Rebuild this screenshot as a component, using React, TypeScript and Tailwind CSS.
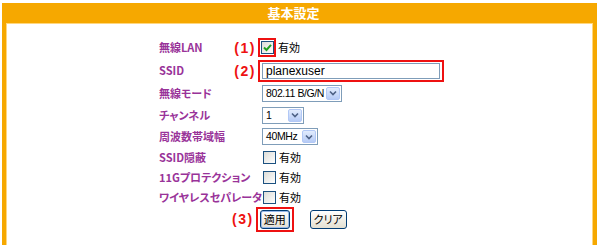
import type { ReactNode } from "react";

const labelFont = "[font-family:'Noto_Sans_CJK_JP','Liberation_Sans',sans-serif] [font-feature-settings:'palt']";

function Marker({ n }: { n: string }) {
  return (
    <span className="font-bold text-[14px] leading-none tracking-[1.5px] text-[#ee1111] [font-family:'Liberation_Sans',sans-serif]">
      ({n})
    </span>
  );
}

function XpCheckbox({ checked = false }: { checked?: boolean }) {
  return (
    <span className="flex h-[13px] w-[13px] shrink-0 items-center justify-center border border-[#1c5180] bg-gradient-to-br from-[#dcdcd7] to-white">
      {checked && (
        <svg width="9" height="9" viewBox="0 0 9 9">
          <path d="M1 4.5 L3.5 7 L8 1.8" fill="none" stroke="#21a121" strokeWidth="2" />
        </svg>
      )}
    </span>
  );
}

function Enable({ checked = false }: { checked?: boolean }) {
  return (
    <div className="flex items-center gap-[3px]">
      <XpCheckbox checked={checked} />
      <span className={`text-[11px] text-black ${labelFont}`}>有効</span>
    </div>
  );
}

function XpSelect({ value, width }: { value: string; width: string }) {
  return (
    <div className={`flex h-[17px] items-center justify-between border border-[#7f9db9] bg-white pl-[3px] pr-[1px] ${width}`}>
      <span className="whitespace-nowrap text-[10.5px] leading-none tracking-[-0.4px] text-black [font-family:'Liberation_Sans',sans-serif]">{value}</span>
      <span className="flex h-[13px] w-[14px] shrink-0 items-center justify-center rounded-[2px] border border-[#b2c8f6] bg-gradient-to-b from-[#e2ecfd] to-[#b6cbf6]">
        <svg width="8" height="6" viewBox="0 0 8 6">
          <path d="M1 1.5 L4 4.5 L7 1.5" fill="none" stroke="#4d6185" strokeWidth="1.6" />
        </svg>
      </span>
    </div>
  );
}

function Row({ h, label, marker, children }: { h: string; label: string; marker?: string; children: ReactNode }) {
  return (
    <div className={`flex items-center ${h}`}>
      <div className="flex w-[99px] shrink-0 items-center justify-between pr-[2px]">
        <span className={`shrink-0 whitespace-nowrap text-[11px] font-bold text-[#993399] ${labelFont}`}>{label}</span>
        {marker && <Marker n={marker} />}
      </div>
      {children}
    </div>
  );
}

function XpButton({ label, focused = false }: { label: string; focused?: boolean }) {
  return (
    <span
      className={`flex h-[19px] items-center justify-center rounded-[3px] border border-[#003c74] bg-gradient-to-b from-white to-[#e3e0d2] text-[11px] text-black ${labelFont} ${
        focused ? "w-[30px] shadow-[inset_0_0_0_1px_#98b8ea]" : "w-[37px]"
      }`}
    >
      {label}
    </span>
  );
}

export default function App() {
  return (
    <div className="h-[245px] w-[600px] overflow-hidden bg-white pl-[2px] pt-[3px]">
      <div className="w-[595px] bg-[#f6a800] px-[4px]">
        <div className={`flex h-[20px] items-center justify-center pr-[12px] text-[13px] font-bold text-white ${labelFont}`}>
          基本設定
        </div>
        <div className="h-[240px] border border-[#ffd77f] bg-white pl-[152px] pt-[12px]">
          <Row h="h-[23px]" label="無線LAN" marker="1">
            <div className="flex items-center">
              <span className="flex h-[19px] w-[18px] items-center justify-center border-2 border-[#ee1111]">
                <XpCheckbox checked />
              </span>
              <span className={`ml-[2px] text-[11px] text-black ${labelFont}`}>有効</span>
            </div>
          </Row>
          <Row h="h-[23px]" label="SSID" marker="2">
            <div className="flex h-[22px] w-[186px] items-center border-2 border-[#ee1111] px-[2px]">
              <div className="flex h-[16px] w-full items-center border border-[#7f9db9] bg-white pl-[3px]">
                <span className="text-[12px] leading-none text-black [font-family:'Liberation_Sans',sans-serif]">planexuser</span>
              </div>
            </div>
          </Row>
          <Row h="h-[22px]" label="無線モード">
            <div className="ml-[4px]">
              <XpSelect value="802.11 B/G/N" width="w-[80px]" />
            </div>
          </Row>
          <Row h="h-[22px]" label="チャンネル">
            <div className="ml-[4px]">
              <XpSelect value="1" width="w-[42px]" />
            </div>
          </Row>
          <Row h="h-[21px]" label="周波数帯域幅">
            <div className="ml-[4px]">
              <XpSelect value="40MHz" width="w-[56px]" />
            </div>
          </Row>
          <Row h="h-[20px]" label="SSID隠蔽">
            <div className="ml-[5px]">
              <Enable />
            </div>
          </Row>
          <Row h="h-[20px]" label="11Gプロテクション">
            <div className="ml-[5px]">
              <Enable />
            </div>
          </Row>
          <Row h="h-[20px]" label="ワイヤレスセパレータ">
            <div className="ml-[5px]">
              <Enable />
            </div>
          </Row>
          <div className="flex h-[24px] items-center pl-[73px]">
            <Marker n="3" />
            <span className="ml-[2px] flex h-[25px] w-[38px] items-center justify-center border-2 border-[#ee1111]">
              <XpButton label="適用" focused />
            </span>
            <span className="ml-[16px]">
              <XpButton label="クリア" />
            </span>
          </div>
        </div>
      </div>
    </div>
  );
}
